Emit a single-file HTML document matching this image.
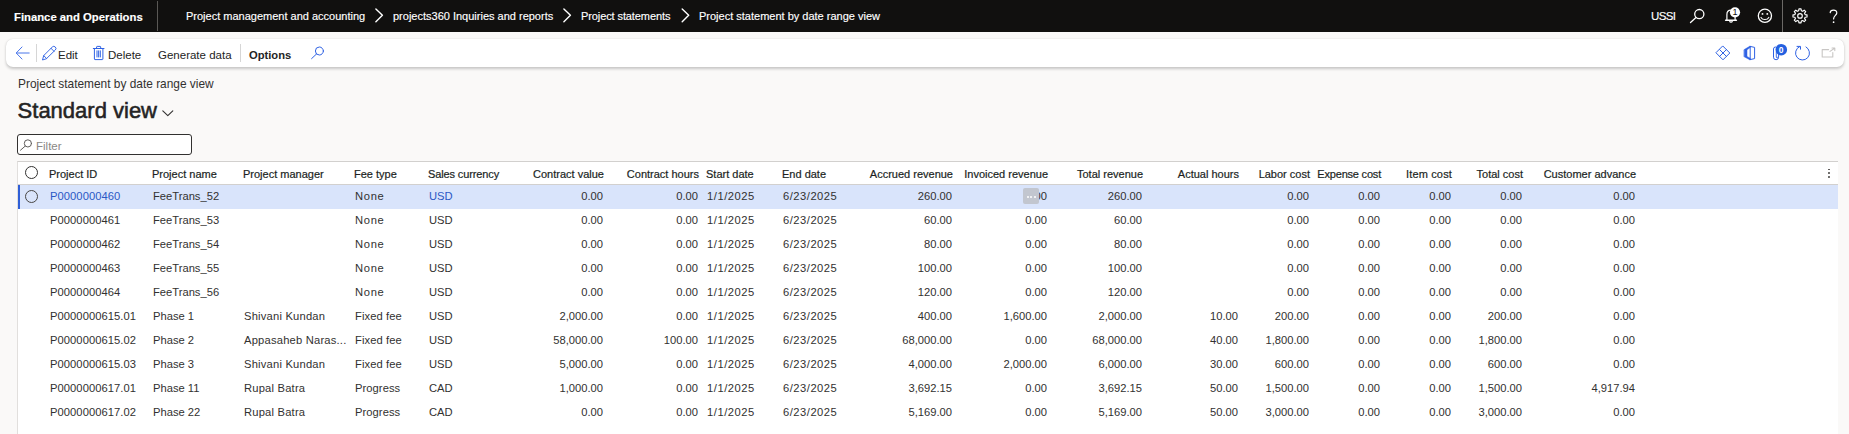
<!DOCTYPE html>
<html><head><meta charset="utf-8"><title>Project statement by date range view</title>
<style>
*{box-sizing:border-box;margin:0;padding:0}
html,body{width:1849px;height:434px;overflow:hidden;background:#faf9f8;font-family:"Liberation Sans",sans-serif;color:#242424}
body{position:relative}
.abs{position:absolute;white-space:nowrap}
svg{position:absolute;overflow:visible}
.topbar{position:absolute;left:0;top:0;width:1849px;height:32px;background:#11100f;color:#fff}
.topbar span{position:absolute;white-space:nowrap;font-size:11px;line-height:14px;top:9px;color:#fff;-webkit-text-stroke:0.15px #fff}
.topbar .brand{left:14px;font-weight:bold;font-size:11.3px;top:9.5px}
.toolbar{position:absolute;left:6px;top:39px;width:1838px;height:28px;background:#fff;border-radius:7px;box-shadow:0 1.5px 3px rgba(0,0,0,.20),0 0 1px rgba(0,0,0,.10)}
.toolbar span.t{position:absolute;top:8.5px;font-size:11.5px;line-height:14px;white-space:nowrap;color:#242424}
.sep{position:absolute;width:1px;background:#d6d6d6}
.caption{left:18px;top:76.5px;font-size:11.9px;line-height:14px;color:#323130}
.title{left:17.6px;top:96.5px;font-size:22px;letter-spacing:0;line-height:28px;font-weight:normal;color:#242424;-webkit-text-stroke:0.55px #242424}
.filter{position:absolute;left:17px;top:134px;width:175px;height:21px;border:1px solid #323130;border-radius:3px;background:#fff}
.filter span{position:absolute;left:18px;top:4px;font-size:11.5px;line-height:14px;color:#8a8886}
.grid{position:absolute;left:17px;top:161px;width:1821px;height:273px;background:#fff;border-top:1px solid #d2d0ce;border-left:1px solid #e1dfdd}
.hrow{position:absolute;left:0;top:0;width:100%;height:23px;border-bottom:1px solid #d2d0ce}
.h{position:absolute;top:5px;font-size:11px;line-height:14px;white-space:nowrap;color:#201f1e;-webkit-text-stroke:0.2px #201f1e}
.row{position:absolute;left:0;width:100%;height:24px}
.row.sel{background:#d9e4fb}
.row.sel:before{content:"";position:absolute;left:0;top:0;width:2px;height:24px;background:#2f5fd7}
.c{position:absolute;top:4px;font-size:11.2px;line-height:14px;white-space:nowrap;color:#323130}
.c.lnk{color:#2b58c5}
.chk{position:absolute;width:13px;height:13px;border:1px solid #323130;border-radius:50%;background:#fff}
.row.sel .chk{background:transparent;border-color:#484644}
.kebab{position:absolute;left:1810.2px;top:6.6px;width:3px;height:12px}
.kebab i{display:block;width:1.8px;height:1.8px;background:#484644;border-radius:50%;margin-bottom:2px}
.dots{position:absolute;left:1005px;top:3px;width:16px;height:16px;background:#c2c6cf;border-radius:2px}
.dots i{position:absolute;top:7.5px;width:2px;height:2px;background:#fff;border-radius:50%}
.dots i:nth-child(1){left:3.5px}.dots i:nth-child(2){left:7.2px}.dots i:nth-child(3){left:11px}
</style></head><body>
<div class="topbar">
<span class="brand">Finance and Operations</span>
<div class="sep" style="left:157px;top:1px;height:30px;background:#5a5855"></div>
<span style="left:186px">Project management and accounting</span>
<span style="left:393px">projects360 Inquiries and reports</span>
<span style="left:581px;letter-spacing:-0.1px">Project statements</span>
<span style="left:699px">Project statement by date range view</span>
<span style="left:1651px;font-size:11.5px;letter-spacing:-0.6px;top:9px">USSI</span>
<div class="sep" style="left:1782px;top:0;height:32px;background:#6b6966"></div>
</div>
<svg width="1849" height="32" style="left:0;top:0" fill="none" stroke="#fff" stroke-width="1.3" stroke-linecap="round" stroke-linejoin="round">
<!-- breadcrumb chevrons -->
<path d="M375.9 8.9 L382.4 15.3 L375.9 21.7 M563.9 8.9 L570.4 15.3 L563.9 21.7 M682.2 8.9 L688.7 15.3 L682.2 21.7" stroke-width="1.4"/>
<!-- search -->
<circle cx="1699.3" cy="14.1" r="4.6"/><path d="M1696 17.5 L1690.5 22.5"/>
<!-- bell -->
<path d="M1726.9 19.8 V14.4 C1726.9 11.7 1728.7 10.1 1731 10.1 C1733.3 10.1 1735.1 11.7 1735.1 14.4 V19.8 M1729.7 21.1 C1730 22.5 1732 22.5 1732.3 21.1" stroke-width="1.2"/>
<path d="M1725.6 20.2 H1736.4" stroke-width="1.5"/>
<circle cx="1735" cy="12.3" r="5.1" fill="#fff" stroke="none"/>
<!-- smiley -->
<circle cx="1764.9" cy="15.8" r="6.6"/>
<circle cx="1762.5" cy="13.9" r="0.95" fill="#fff" stroke="none"/><circle cx="1767.3" cy="13.9" r="0.95" fill="#fff" stroke="none"/>
<path d="M1761 17.4 C1762.4 20.3 1767.4 20.3 1768.8 17.4" stroke-width="1.1"/>
<!-- gear -->
<path d="M1798.67 10.77 L1798.95 8.88 L1801.05 8.88 L1801.33 10.77 L1802.69 11.33 L1804.22 10.19 L1805.71 11.68 L1804.57 13.21 L1805.13 14.57 L1807.02 14.85 L1807.02 16.95 L1805.13 17.23 L1804.57 18.59 L1805.71 20.12 L1804.22 21.61 L1802.69 20.47 L1801.33 21.03 L1801.05 22.92 L1798.95 22.92 L1798.67 21.03 L1797.31 20.47 L1795.78 21.61 L1794.29 20.12 L1795.43 18.59 L1794.87 17.23 L1792.98 16.95 L1792.98 14.85 L1794.87 14.57 L1795.43 13.21 L1794.29 11.68 L1795.78 10.19 L1797.31 11.33 Z" stroke-width="1.15" stroke-linejoin="round"/>
<circle cx="1800" cy="15.9" r="2.3" stroke-width="1.15"/>
<!-- help -->
<path d="M1830.2 12.6 C1830.4 9.2 1837 9.2 1836.8 12.9 C1836.7 15.4 1833.6 15.6 1833.6 19" stroke-width="1.2"/>
<circle cx="1833.6" cy="22.2" r="0.85" fill="#fff" stroke="none"/>
</svg>
<span class="abs" style="left:1732.5px;top:7.2px;font-size:9px;line-height:10px;color:#11100f">1</span>
<div class="toolbar">
<span class="t" style="left:52px">Edit</span>
<span class="t" style="left:102px">Delete</span>
<span class="t" style="left:152px">Generate data</span>
<span class="t" style="left:243px;font-weight:bold;font-size:11.2px">Options</span>
<div class="sep" style="left:30px;top:5px;height:18px"></div>
<div class="sep" style="left:234px;top:5px;height:18px"></div>
</div>
<svg width="1849" height="40" style="left:0;top:36px" fill="none" stroke="#2f62e4" stroke-width="1" stroke-linecap="round" stroke-linejoin="round">
<g transform="translate(0,-36)">
<!-- back -->
<path d="M29.2 53 H16.6 M22 47 L16.2 53 L22 59" stroke="#4a76ea" stroke-width="1"/>
<!-- pencil -->
<path stroke-width=".95" d="M42.6 59.6 L43.7 55.6 L52.3 47 a2.1 2.1 0 0 1 3 3 L46.6 58.5 Z M51 48.3 L54 51.3 M43.7 55.6 L46.6 58.5"/>
<!-- trash -->
<path d="M93.3 48.5 H104 M96.6 48.3 V47 a.6 .6 0 0 1 .6 -.6 h2.9 a.6 .6 0 0 1 .6 .6 V48.3 M94.4 48.6 V59 a.6 .6 0 0 0 .6 .6 h7.3 a.6 .6 0 0 0 .6 -.6 V48.6 M97 50.8 V57 M98.65 50.8 V57 M100.3 50.8 V57" stroke-width="1"/>
<!-- search -->
<circle cx="319.4" cy="51" r="4"/><path d="M316.5 54 L311.6 58.6"/>
<!-- diamond -->
<path d="M1723 46.2 L1729.8 53 L1723 59.8 L1716.2 53 Z M1719.6 49.6 L1726.4 56.4 M1726.4 49.6 L1719.6 56.4" stroke-width="1"/>
<!-- office -->
<path d="M1744.2 49.6 L1750.2 46 V47.6 L1747 49.8 V56.4 L1750.2 58.2 V60 L1744.2 56.8 Z" fill="#2f62e4" stroke-width=".5"/>
<path d="M1750.2 46.4 L1754.6 47.4 V58.6 L1750.2 59.6 M1750.2 47 V59" stroke-width="1"/>
<!-- paperclip -->
<path d="M1778.6 50 V57.2 a2.55 2.55 0 0 1 -5.1 0 V49 a2 2 0 0 1 4 0" stroke-width="1"/>
<path d="M1776.3 52 V57 a.9 .9 0 0 0 1.8 0" stroke-width=".9"/>
<circle cx="1781.3" cy="49.7" r="5.8" fill="#2460e0" stroke="none"/>
<!-- refresh -->
<path d="M1806 46.9 A7 7 0 1 1 1799.6 46.6 M1797 46.4 H1800.5 V49.2" stroke-width="1"/>
<!-- popout -->
<path d="M1828.6 49.6 H1822.2 V57 H1832.8 V52.6 M1830 51.4 L1834.6 48.2 M1832 48 H1834.8 V50.6" stroke="#c8c6c4" stroke-width="1.1"/>
</g>
</svg>
<span class="abs" style="left:1778.7px;top:44.8px;font-size:8.5px;line-height:10px;color:#fff;font-weight:bold">0</span>
<div class="abs caption">Project statement by date range view</div>
<div class="abs title">Standard view</div>
<svg width="12" height="7" style="left:162px;top:109.5px" fill="none" stroke="#323130" stroke-width="1.1" stroke-linecap="round" stroke-linejoin="round"><path d="M0.8 0.8 L5.8 5.7 L10.8 0.8"/></svg>
<div class="filter"><span>Filter</span></div>
<svg width="13" height="13" style="left:19.5px;top:138.5px" fill="none" stroke="#605e5c" stroke-width="1" stroke-linecap="round"><circle cx="7.9" cy="4.4" r="3.6"/><path d="M5.2 7.1 L0.5 11.2"/></svg>

<div class="grid">
<div class="hrow">
<span class="chk" style="left:7px;top:4px"></span>
<span class="h" style="left:31px">Project ID</span>
<span class="h" style="left:134px">Project name</span>
<span class="h" style="left:225px">Project manager</span>
<span class="h" style="left:336px">Fee type</span>
<span class="h" style="left:410px;letter-spacing:-0.12px">Sales currency</span>
<span class="h" style="right:1234px">Contract value</span>
<span class="h" style="right:1139px">Contract hours</span>
<span class="h" style="left:688px">Start date</span>
<span class="h" style="left:764px">End date</span>
<span class="h" style="right:885px">Accrued revenue</span>
<span class="h" style="right:790px">Invoiced revenue</span>
<span class="h" style="right:695px">Total revenue</span>
<span class="h" style="right:599px">Actual hours</span>
<span class="h" style="right:528px">Labor cost</span>
<span class="h" style="right:457px;letter-spacing:-0.2px">Expense cost</span>
<span class="h" style="right:386px;letter-spacing:0.15px">Item cost</span>
<span class="h" style="right:315px">Total cost</span>
<span class="h" style="right:202px">Customer advance</span>
<span class="kebab"><i></i><i></i><i></i></span>
</div>
<div class="row sel" style="top:23px">
<span class="chk" style="left:7px;top:5px"></span>
<span class="c lnk" style="left:32px;letter-spacing:0.06px">P0000000460</span>
<span class="c" style="left:135px">FeeTrans_52</span>
<span class="c" style="left:337px;letter-spacing:0.7px">None</span>
<span class="c lnk" style="left:411px">USD</span>
<span class="c" style="right:1235px">0.00</span>
<span class="c" style="right:1140px">0.00</span>
<span class="c" style="left:689px;letter-spacing:0.53px">1/1/2025</span>
<span class="c" style="left:765px;letter-spacing:0.5px">6/23/2025</span>
<span class="c" style="right:886px">260.00</span>
<span class="c" style="right:791px">0.00</span>
<span class="c" style="right:696px">260.00</span>
<span class="c" style="right:529px">0.00</span>
<span class="c" style="right:458px">0.00</span>
<span class="c" style="right:387px">0.00</span>
<span class="c" style="right:316px">0.00</span>
<span class="c" style="right:203px">0.00</span>
<span class="dots"><i></i><i></i><i></i></span>
</div>
<div class="row" style="top:47px">
<span class="c" style="left:32px;letter-spacing:0.06px">P0000000461</span>
<span class="c" style="left:135px">FeeTrans_53</span>
<span class="c" style="left:337px;letter-spacing:0.7px">None</span>
<span class="c" style="left:411px">USD</span>
<span class="c" style="right:1235px">0.00</span>
<span class="c" style="right:1140px">0.00</span>
<span class="c" style="left:689px;letter-spacing:0.53px">1/1/2025</span>
<span class="c" style="left:765px;letter-spacing:0.5px">6/23/2025</span>
<span class="c" style="right:886px">60.00</span>
<span class="c" style="right:791px">0.00</span>
<span class="c" style="right:696px">60.00</span>
<span class="c" style="right:529px">0.00</span>
<span class="c" style="right:458px">0.00</span>
<span class="c" style="right:387px">0.00</span>
<span class="c" style="right:316px">0.00</span>
<span class="c" style="right:203px">0.00</span>
</div>
<div class="row" style="top:71px">
<span class="c" style="left:32px;letter-spacing:0.06px">P0000000462</span>
<span class="c" style="left:135px">FeeTrans_54</span>
<span class="c" style="left:337px;letter-spacing:0.7px">None</span>
<span class="c" style="left:411px">USD</span>
<span class="c" style="right:1235px">0.00</span>
<span class="c" style="right:1140px">0.00</span>
<span class="c" style="left:689px;letter-spacing:0.53px">1/1/2025</span>
<span class="c" style="left:765px;letter-spacing:0.5px">6/23/2025</span>
<span class="c" style="right:886px">80.00</span>
<span class="c" style="right:791px">0.00</span>
<span class="c" style="right:696px">80.00</span>
<span class="c" style="right:529px">0.00</span>
<span class="c" style="right:458px">0.00</span>
<span class="c" style="right:387px">0.00</span>
<span class="c" style="right:316px">0.00</span>
<span class="c" style="right:203px">0.00</span>
</div>
<div class="row" style="top:95px">
<span class="c" style="left:32px;letter-spacing:0.06px">P0000000463</span>
<span class="c" style="left:135px">FeeTrans_55</span>
<span class="c" style="left:337px;letter-spacing:0.7px">None</span>
<span class="c" style="left:411px">USD</span>
<span class="c" style="right:1235px">0.00</span>
<span class="c" style="right:1140px">0.00</span>
<span class="c" style="left:689px;letter-spacing:0.53px">1/1/2025</span>
<span class="c" style="left:765px;letter-spacing:0.5px">6/23/2025</span>
<span class="c" style="right:886px">100.00</span>
<span class="c" style="right:791px">0.00</span>
<span class="c" style="right:696px">100.00</span>
<span class="c" style="right:529px">0.00</span>
<span class="c" style="right:458px">0.00</span>
<span class="c" style="right:387px">0.00</span>
<span class="c" style="right:316px">0.00</span>
<span class="c" style="right:203px">0.00</span>
</div>
<div class="row" style="top:119px">
<span class="c" style="left:32px;letter-spacing:0.06px">P0000000464</span>
<span class="c" style="left:135px">FeeTrans_56</span>
<span class="c" style="left:337px;letter-spacing:0.7px">None</span>
<span class="c" style="left:411px">USD</span>
<span class="c" style="right:1235px">0.00</span>
<span class="c" style="right:1140px">0.00</span>
<span class="c" style="left:689px;letter-spacing:0.53px">1/1/2025</span>
<span class="c" style="left:765px;letter-spacing:0.5px">6/23/2025</span>
<span class="c" style="right:886px">120.00</span>
<span class="c" style="right:791px">0.00</span>
<span class="c" style="right:696px">120.00</span>
<span class="c" style="right:529px">0.00</span>
<span class="c" style="right:458px">0.00</span>
<span class="c" style="right:387px">0.00</span>
<span class="c" style="right:316px">0.00</span>
<span class="c" style="right:203px">0.00</span>
</div>
<div class="row" style="top:143px">
<span class="c" style="left:32px;letter-spacing:0.06px">P0000000615.01</span>
<span class="c" style="left:135px">Phase 1</span>
<span class="c" style="left:226px;letter-spacing:0.2px">Shivani Kundan</span>
<span class="c" style="left:337px;letter-spacing:0.1px">Fixed fee</span>
<span class="c" style="left:411px">USD</span>
<span class="c" style="right:1235px">2,000.00</span>
<span class="c" style="right:1140px">0.00</span>
<span class="c" style="left:689px;letter-spacing:0.53px">1/1/2025</span>
<span class="c" style="left:765px;letter-spacing:0.5px">6/23/2025</span>
<span class="c" style="right:886px">400.00</span>
<span class="c" style="right:791px">1,600.00</span>
<span class="c" style="right:696px">2,000.00</span>
<span class="c" style="right:600px">10.00</span>
<span class="c" style="right:529px">200.00</span>
<span class="c" style="right:458px">0.00</span>
<span class="c" style="right:387px">0.00</span>
<span class="c" style="right:316px">200.00</span>
<span class="c" style="right:203px">0.00</span>
</div>
<div class="row" style="top:167px">
<span class="c" style="left:32px;letter-spacing:0.06px">P0000000615.02</span>
<span class="c" style="left:135px">Phase 2</span>
<span class="c" style="left:226px;letter-spacing:0.2px">Appasaheb Naras...</span>
<span class="c" style="left:337px;letter-spacing:0.1px">Fixed fee</span>
<span class="c" style="left:411px">USD</span>
<span class="c" style="right:1235px">58,000.00</span>
<span class="c" style="right:1140px">100.00</span>
<span class="c" style="left:689px;letter-spacing:0.53px">1/1/2025</span>
<span class="c" style="left:765px;letter-spacing:0.5px">6/23/2025</span>
<span class="c" style="right:886px">68,000.00</span>
<span class="c" style="right:791px">0.00</span>
<span class="c" style="right:696px">68,000.00</span>
<span class="c" style="right:600px">40.00</span>
<span class="c" style="right:529px">1,800.00</span>
<span class="c" style="right:458px">0.00</span>
<span class="c" style="right:387px">0.00</span>
<span class="c" style="right:316px">1,800.00</span>
<span class="c" style="right:203px">0.00</span>
</div>
<div class="row" style="top:191px">
<span class="c" style="left:32px;letter-spacing:0.06px">P0000000615.03</span>
<span class="c" style="left:135px">Phase 3</span>
<span class="c" style="left:226px;letter-spacing:0.2px">Shivani Kundan</span>
<span class="c" style="left:337px;letter-spacing:0.1px">Fixed fee</span>
<span class="c" style="left:411px">USD</span>
<span class="c" style="right:1235px">5,000.00</span>
<span class="c" style="right:1140px">0.00</span>
<span class="c" style="left:689px;letter-spacing:0.53px">1/1/2025</span>
<span class="c" style="left:765px;letter-spacing:0.5px">6/23/2025</span>
<span class="c" style="right:886px">4,000.00</span>
<span class="c" style="right:791px">2,000.00</span>
<span class="c" style="right:696px">6,000.00</span>
<span class="c" style="right:600px">30.00</span>
<span class="c" style="right:529px">600.00</span>
<span class="c" style="right:458px">0.00</span>
<span class="c" style="right:387px">0.00</span>
<span class="c" style="right:316px">600.00</span>
<span class="c" style="right:203px">0.00</span>
</div>
<div class="row" style="top:215px">
<span class="c" style="left:32px;letter-spacing:0.06px">P0000000617.01</span>
<span class="c" style="left:135px">Phase 11</span>
<span class="c" style="left:226px;letter-spacing:0.2px">Rupal Batra</span>
<span class="c" style="left:337px;letter-spacing:0.06px">Progress</span>
<span class="c" style="left:411px">CAD</span>
<span class="c" style="right:1235px">1,000.00</span>
<span class="c" style="right:1140px">0.00</span>
<span class="c" style="left:689px;letter-spacing:0.53px">1/1/2025</span>
<span class="c" style="left:765px;letter-spacing:0.5px">6/23/2025</span>
<span class="c" style="right:886px">3,692.15</span>
<span class="c" style="right:791px">0.00</span>
<span class="c" style="right:696px">3,692.15</span>
<span class="c" style="right:600px">50.00</span>
<span class="c" style="right:529px">1,500.00</span>
<span class="c" style="right:458px">0.00</span>
<span class="c" style="right:387px">0.00</span>
<span class="c" style="right:316px">1,500.00</span>
<span class="c" style="right:203px">4,917.94</span>
</div>
<div class="row" style="top:239px">
<span class="c" style="left:32px;letter-spacing:0.06px">P0000000617.02</span>
<span class="c" style="left:135px">Phase 22</span>
<span class="c" style="left:226px;letter-spacing:0.2px">Rupal Batra</span>
<span class="c" style="left:337px;letter-spacing:0.06px">Progress</span>
<span class="c" style="left:411px">CAD</span>
<span class="c" style="right:1235px">0.00</span>
<span class="c" style="right:1140px">0.00</span>
<span class="c" style="left:689px;letter-spacing:0.53px">1/1/2025</span>
<span class="c" style="left:765px;letter-spacing:0.5px">6/23/2025</span>
<span class="c" style="right:886px">5,169.00</span>
<span class="c" style="right:791px">0.00</span>
<span class="c" style="right:696px">5,169.00</span>
<span class="c" style="right:600px">50.00</span>
<span class="c" style="right:529px">3,000.00</span>
<span class="c" style="right:458px">0.00</span>
<span class="c" style="right:387px">0.00</span>
<span class="c" style="right:316px">3,000.00</span>
<span class="c" style="right:203px">0.00</span>
</div>
</div>
</body></html>
